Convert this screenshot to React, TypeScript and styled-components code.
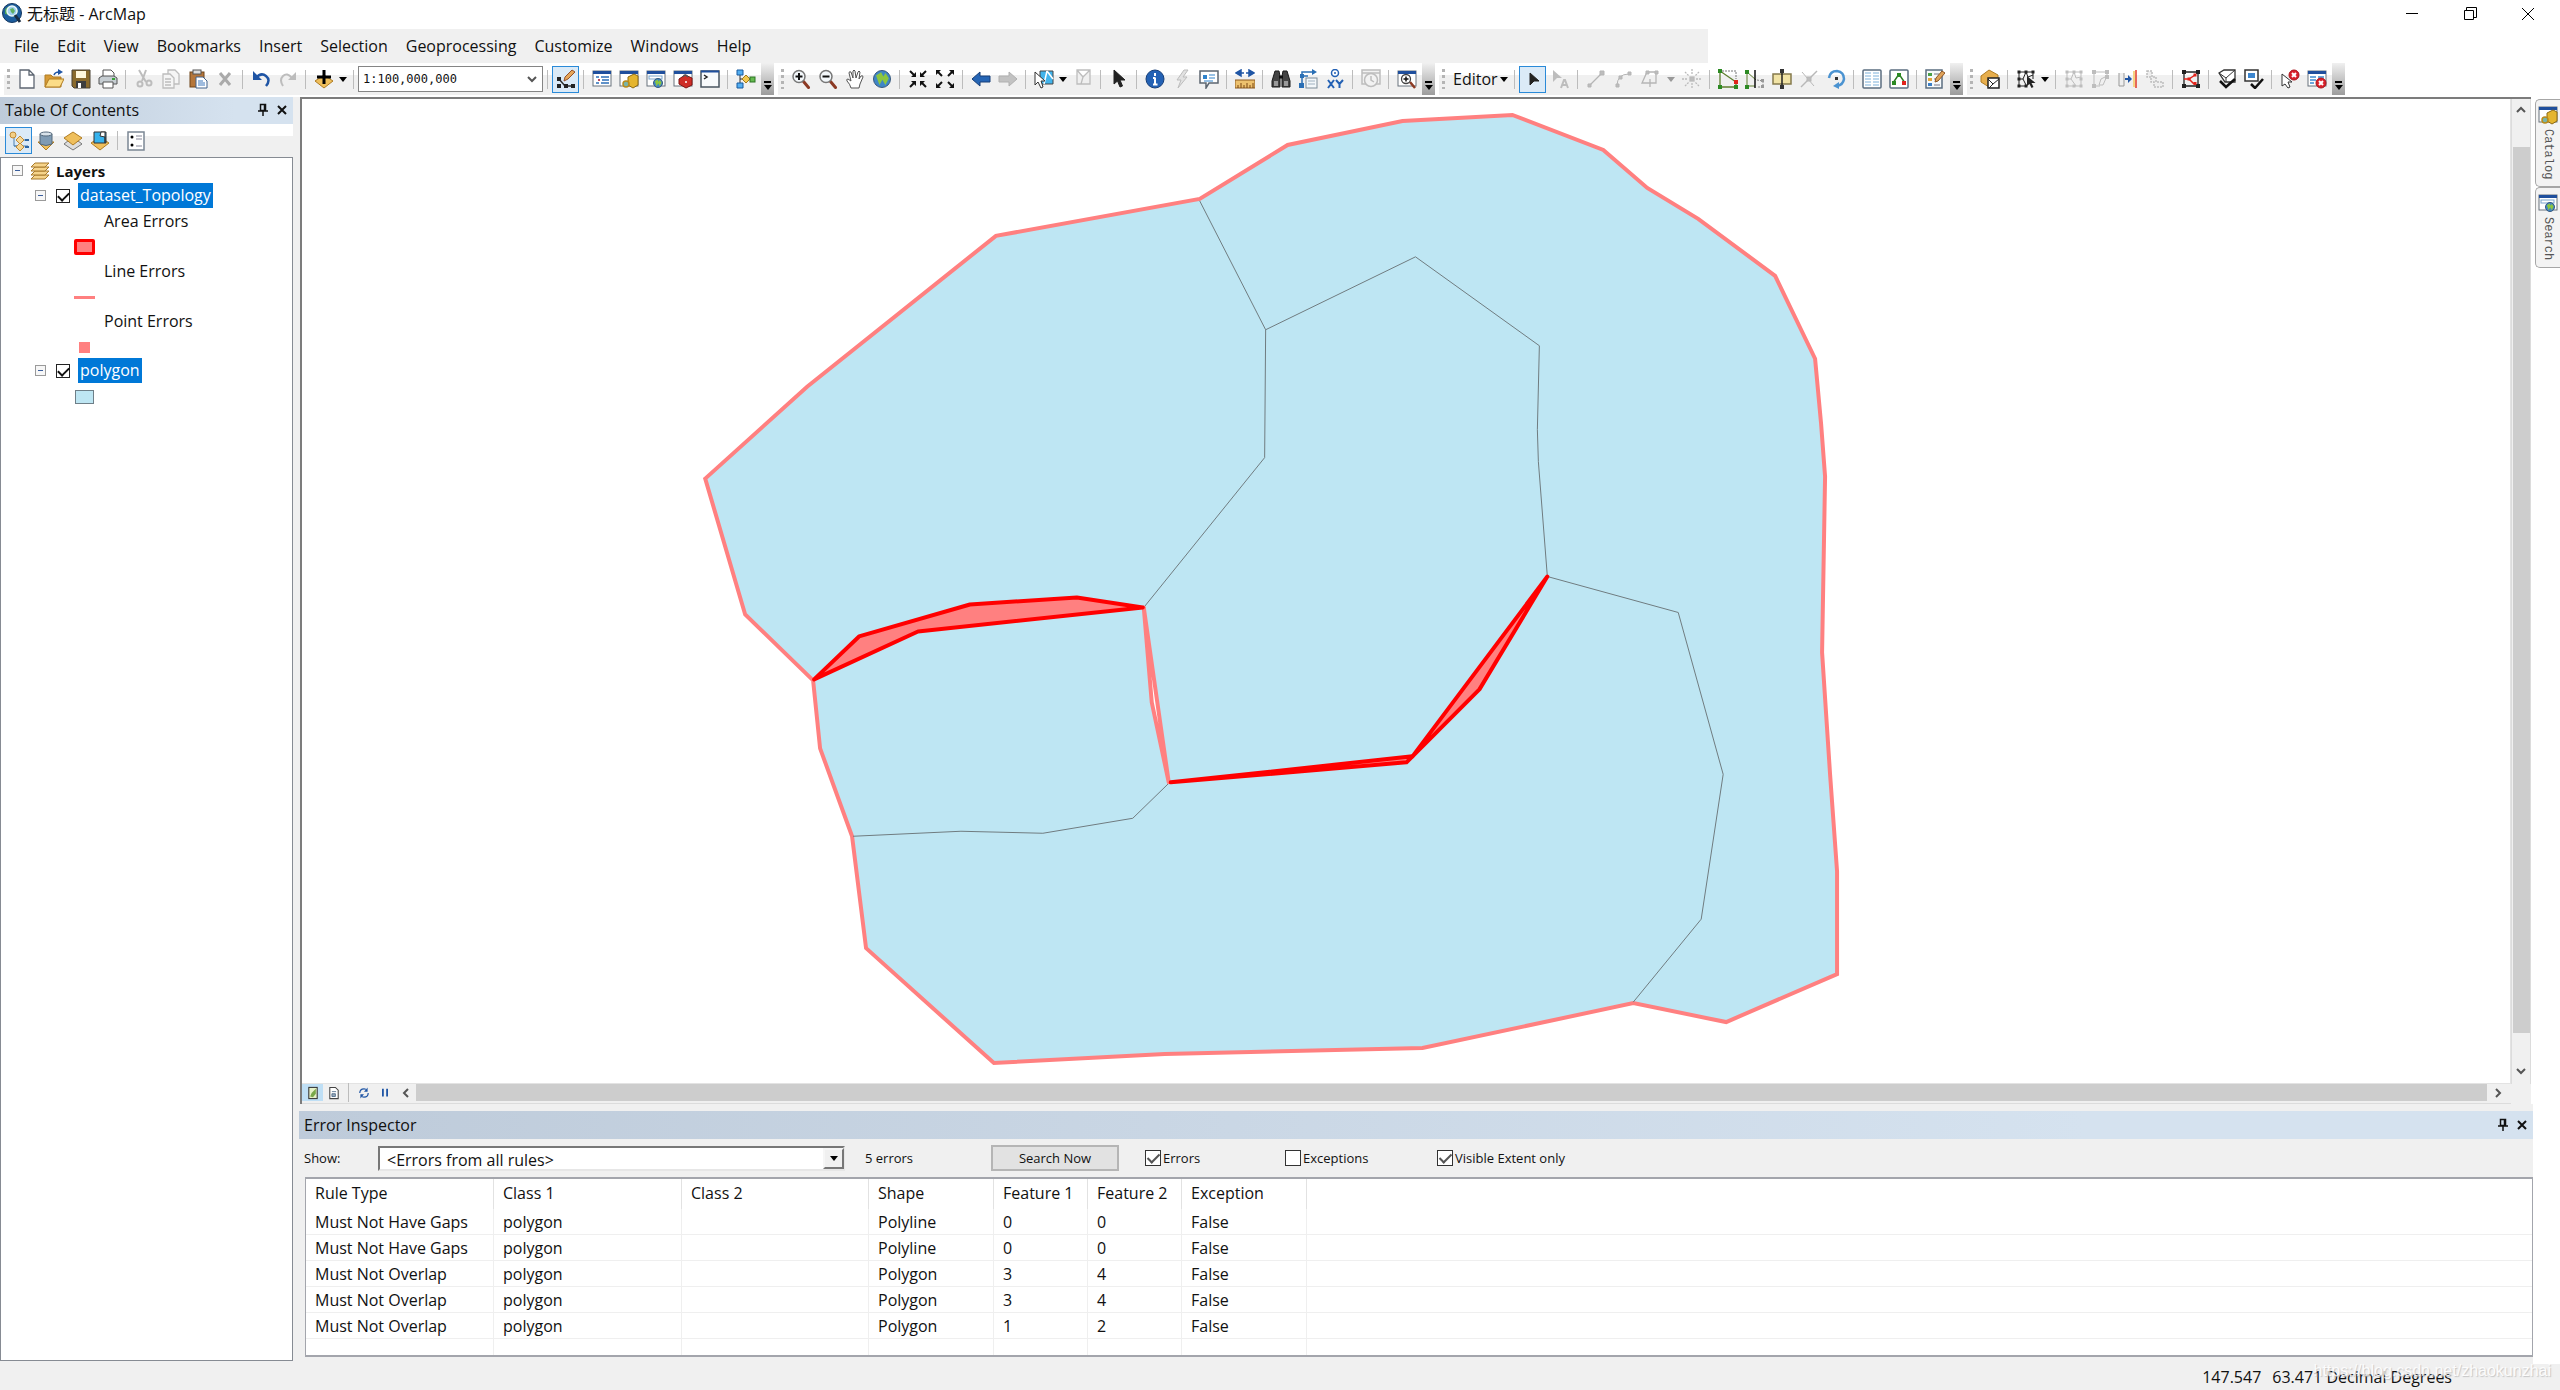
import React, { useId, useState } from "react";
import styled, { createGlobalStyle, css } from "styled-components";

const ui = '"Open Sans", "Noto Sans", "Noto Sans CJK SC", sans-serif';
const mono = '"DejaVu Sans Mono", "Noto Sans CJK SC", monospace';
const face = "#f0f0f0";

const Global = createGlobalStyle`
  * { box-sizing: border-box; }
  body { margin: 0; background: #fff; font-family: ${ui}; font-size: 16px; line-height: 24px; color: #111; }
  button, select, input { font: inherit; color: inherit; margin: 0; padding: 0; }
  button { border: 0; background: none; }
  svg { display: block; flex: none; }
`;

/* ---------- icons ---------- */

const gold = "#efbf5c";
const goldDark = "#b07c22";
const grey = "#bdbdbd";
const blue = "#1f55a5";
const ink = "#222";

const Win = () => (
  <>
    <rect x="1" y="2" width="18" height="15" fill="#fff" stroke="#68727c" />
    <rect x="1" y="2" width="18" height="3" fill="#1f4f9d" />
  </>
);
const Globe = ({ x = 13, y = 14, r = 4 }: { x?: number; y?: number; r?: number }) => (
  <>
    <circle cx={x} cy={y} r={r} fill="#3f86c6" stroke="#37587c" />
    <path
      d={`M${x - r * 0.7} ${y - r * 0.4}l${r * 0.6} ${-r * 0.4}l${r * 0.3} ${r * 0.6}l${-r * 0.5} ${r * 0.9}z M${x} ${y}l${r * 0.4} ${-r * 0.7}l${r * 0.4} ${r * 0.6}l${-r * 0.4} ${r * 0.8}z`}
      fill="#8cc63f"
    />
  </>
);
const Frame = ({ c = ink }: { c?: string }) => (
  <>
    <path d="M3 3v14h14V3zM3 10h4l3-7M7 10l5 7M10 3l2 6 5-1" fill="none" stroke={c} />
    <path d="M1.500 1.500h3v3h-3zM8.500 1.500h3v3h-3zM15.500 1.500h3v3h-3zM1.500 8.500h3v3h-3zM15.500 8.500h3v3h-3zM1.500 15.500h3v3h-3zM8.500 15.500h3v3h-3zM15.500 15.500h3v3h-3z" fill={c} />
  </>
);
const Glass = ({ plus }: { plus?: boolean }) => (
  <>
    <path d="M12.500 12.500l5 6" stroke="#8c3a24" strokeWidth="3" strokeLinecap="round" />
    <circle cx="8" cy="7.500" r="6" fill="#f3f7fa" stroke="#777" strokeWidth="1.500" />
    <path d={plus ? "M4.500 7.500h7M8 4v7" : "M4.500 7.500h7"} stroke="#111" strokeWidth="2" />
  </>
);
const Diamond = ({ y = 10, c = gold }: { y?: number; c?: string }) => (
  <path d={`M10 ${y - 6}l9 6-9 7-9-7z`} fill={c} stroke={goldDark} />
);
const RedX = ({ x = 13, y = 13, r = 5 }: { x?: number; y?: number; r?: number }) => (
  <>
    <circle cx={x} cy={y} r={r} fill="#d9202a" stroke="#a8141c" />
    <path d={`M${x - 2} ${y - 2}l4 4m0-4l-4 4`} stroke="#fff" strokeWidth="2" />
  </>
);
const Sheet = ({ c = "#5d6672", f = "#fff" }: { c?: string; f?: string }) => (
  <path d="M3 1h9l5 5v13H3zM12 1v5h5" fill={f} stroke={c} strokeWidth="1.300" />
);
const Pointer = ({ c = ink, f = ink }: { c?: string; f?: string }) => (
  <path d="M5 1v14l3.500-3 2.500 6 2.500-1-2.500-6h5z" fill={f} stroke={c} />
);

const icons: Record<string, React.ReactNode> = {
  new: <Sheet />,
  open: (
    <>
      <path d="M1 6h6l2 2h8v10H1z" fill="#d69a36" stroke={goldDark} />
      <path d="M1 18l4-8h15l-4 8z" fill="#fbdc87" stroke={goldDark} />
      <path d="M10 6q1-3 5-3" stroke={blue} strokeWidth="1.500" fill="none" />
      <path d="M14 0l5 3-5 3z" fill={blue} />
    </>
  ),
  save: (
    <>
      <path d="M1 1h18v18H3l-2-2z" fill="#8a6a2c" stroke="#4b4234" />
      <rect x="5" y="2" width="10" height="7" fill="#fff7dc" />
      <rect x="5" y="12" width="10" height="7" fill="#3d3d3d" />
      <rect x="7" y="14" width="3" height="5" fill="#fff" />
    </>
  ),
  print: (
    <>
      <path d="M5 8V1h8l3 3v4" fill="#fff" stroke="#555" />
      <path d="M1 9l3-2h12l3 2v6H1z" fill="#c6cdd2" stroke="#555" />
      <path d="M5 13h10v6H5z" fill="#fff" stroke="#555" />
      <path d="M14 10h3" stroke="#39a03a" strokeWidth="2" />
    </>
  ),
  cut: (
    <g fill="none" stroke={grey} strokeWidth="2">
      <path d="M5 1l7 12M12 1L8 12" />
      <circle cx="6" cy="15" r="2.500" />
      <circle cx="15" cy="14" r="2.500" />
    </g>
  ),
  copy: (
    <g fill="#f5f5f5" stroke={grey} strokeWidth="1.300">
      <path d="M7 1h7l4 4v10H7z" />
      <path d="M2 5h7l4 4v10H2zM4 10h6M4 13h6M4 16h6" />
    </g>
  ),
  paste: (
    <>
      <rect x="2" y="3" width="14" height="15" fill="#b5763a" stroke="#6f4419" />
      <rect x="5" y="1" width="8" height="4" fill="#ddd" stroke="#555" />
      <path d="M8 8h7l4 4v7H8z" fill="#fff" stroke="#40628c" />
      <path d="M10 12h5M10 14h7M10 16h7" stroke="#3f78bd" />
    </>
  ),
  del: <path d="M5 4l10 12M15 4L5 16" stroke="#aaa" strokeWidth="3" />,
  undo: (
    <>
      <path d="M5 9q5-6 10-2t0 10" fill="none" stroke={blue} strokeWidth="2.500" />
      <path d="M2 2v9h9z" fill={blue} />
    </>
  ),
  redo: (
    <>
      <path d="M14 9Q9 3 5 7t0 10" fill="none" stroke={grey} strokeWidth="2" />
      <path d="M18 3v8H10z" fill={grey} />
    </>
  ),
  add: (
    <>
      <Diamond y={12} />
      <path d="M10 1v14M3 8h14" stroke="#000" strokeWidth="3" />
    </>
  ),
  sketch: (
    <>
      <path d="M3 10l6 7h8" fill="none" stroke="#333" strokeWidth="1.500" />
      <path d="M1 8h4v4H1zM1 15h4v4H1zM8 15h4v4H8zM15 15h4v4h-4z" fill="#222" />
      <path d="M8 12l1-4 7-7 3 2-7 7z" fill="#e6a659" stroke="#94512a" />
    </>
  ),
  toc: (
    <>
      <Win />
      <path d="M4 8h3M9 8h8M6 11h2M10 11h7M4 14h3M9 14h8" stroke="#2d6fb8" strokeWidth="1.500" />
      <path d="M6 11h2" stroke="#d33" strokeWidth="1.500" />
    </>
  ),
  catalog: (
    <>
      <Win />
      <path d="M9 8l6-3 4 2v9l-5 3-5-3z" fill="#e5b52e" stroke="#8d6a12" />
      <circle cx="7" cy="15" r="3" fill="#79b4a8" stroke="#b78a1b" strokeWidth="1.500" />
    </>
  ),
  search: (
    <>
      <Win />
      <rect x="3" y="7" width="13" height="3" fill="#fff" stroke="#7aa5cc" />
      <Globe x={12} y={14} r={4.5} />
    </>
  ),
  toolbox: (
    <>
      <Win />
      <path d="M6 10l6-4 7 3v7l-6 3-7-4z" fill="#cf2d27" stroke="#7d1512" />
      <path d="M10 8q2-4 5 0" fill="none" stroke="#555" strokeWidth="1.500" />
      <circle cx="13" cy="13" r="1" fill="#fff" />
    </>
  ),
  python: (
    <>
      <rect x="1" y="2" width="18" height="16" fill="#f8fafc" stroke="#4a5560" strokeWidth="1.500" />
      <path d="M1 2.500h18" stroke="#1f4f9d" strokeWidth="2" />
      <path d="M4 6l3 2-3 2" fill="none" stroke="#222" strokeWidth="1.500" />
    </>
  ),
  model: (
    <>
      <path d="M4 4v12M4 10h14" stroke="#333" />
      <path d="M1 1h6v5H1zM1 14h6v5H1z" fill="#54aef0" stroke="#175aa0" />
      <path d="M6 10l4-4 4 4-4 4z" fill="#f3c84e" stroke="#a47a1a" />
      <rect x="14" y="8" width="5" height="5" fill="#65ba50" stroke="#2c7422" />
    </>
  ),
  zoomin: <Glass plus />,
  zoomout: <Glass />,
  pan: (
    <path
      d="M6 19q-1-4-4-7-1-2 1-2l3 2L4 4q0-2 2-1l2 6V2q1-2 2 0l1 7 2-6q1-2 2 0l-1 7 2-3q2-1 2 1l-3 7-1 4z"
      fill="#fff"
      stroke="#555"
    />
  ),
  globe: <Globe x={10} y={10} r={8.5} />,
  shrink: (
    <g fill="#111" stroke="#111" strokeWidth="2">
      <path d="M2 2l4 4M18 2l-4 4M2 18l4-4M18 18l-4-4" />
      <path d="M8 3v5H3zM12 3v5h5zM8 17v-5H3zM12 17v-5h5z" strokeWidth="0" />
    </g>
  ),
  expand: (
    <g fill="#111" stroke="#111" strokeWidth="2">
      <path d="M3 3l4 4M17 3l-4 4M3 17l4-4M17 17l-4-4" />
      <path d="M1 6V1h5zM19 6V1h-5zM1 14v5h5zM19 14v5h-5z" strokeWidth="0" />
    </g>
  ),
  back: <path d="M1 10l8-7v4h10v6H9v4z" fill="#2565b5" stroke="#173f78" />,
  fwd: <path d="M19 10l-8-7v4H1v6h10v4z" fill="#c2c2c2" stroke="#b0b0b0" />,
  select: (
    <>
      <path d="M6 2h13v13H6z" fill="#42b4ec" stroke="#444" />
      <path d="M13 2l6 8M13 2l-3 13" stroke="#fff" strokeWidth="1.500" />
      <path d="M1 3v13l3-3 3 6 2-1-2-6h4z" fill="#fff" stroke="#333" />
    </>
  ),
  clear: (
    <g fill="#f0f0f0" stroke={grey} strokeWidth="1.300">
      <path d="M4 1h13v14H4zM4 1l6 7 7-7M10 8l-2 7" />
    </g>
  ),
  arrow: <Pointer />,
  info: (
    <>
      <circle cx="10" cy="10" r="9" fill="#2361b4" stroke="#163e78" />
      <path d="M10 4v3M10 8.500v7M8 15.500h4.500M8 9h2" stroke="#fff" strokeWidth="2" />
    </>
  ),
  bolt: <path d="M12 1L5 11h4L6 19l9-11h-4l5-7z" fill="#e2e2e2" stroke={grey} />,
  popup: (
    <>
      <path d="M1 2h18v12h-9l-3 5v-5H1z" fill="#fff" stroke="#5c6670" strokeWidth="1.500" />
      <path d="M4 6h4v4H4z" fill="#3183cb" />
      <path d="M10 6h6M10 9h6M5 12h9" stroke="#3183cb" />
    </>
  ),
  measure: (
    <>
      <path d="M1 4l5-3v6zM19 4l-5-3v6zM3 4h6M11 4h6" fill={blue} stroke={blue} strokeWidth="1.500" />
      <rect x="0" y="11" width="20" height="8" fill="#edc16e" stroke="#8b5a20" />
      <path d="M3 19v-3M6 19v-5M9 19v-3M12 19v-5M15 19v-3M18 19v-5" stroke="#7a4612" />
    </>
  ),
  find: (
    <>
      <path d="M4 2h4l1 5v11H1v-6zM16 2h-4l-1 5v11h8v-6z" fill="#444" stroke="#1b1b1b" />
      <path d="M3 12h4v5H3zM13 12h4v5h-4z" fill="#999" />
      <path d="M8 8h4" stroke="#111" strokeWidth="3" />
    </>
  ),
  route: (
    <>
      <path d="M4 14V3h11M4 7h6" stroke="#2a6fb5" fill="none" strokeWidth="1.500" />
      <path d="M14 0l5 3-5 3zM1 14h5v5H1zM2 5h4v4H2z" fill="#2a6fb5" />
      <rect x="8" y="9" width="11" height="10" fill="#f3f7fa" stroke="#7c8c99" />
      <path d="M10 12h7M10 15h7" stroke="#9fb1c0" />
    </>
  ),
  xy: (
    <>
      <circle cx="10" cy="4" r="3.500" fill="#fff" stroke="#2361b4" strokeWidth="1.500" />
      <circle cx="10" cy="4" r="1" fill="#2361b4" />
      <path d="M3 11l6 8M9 11l-6 8M11 11l3.500 4 3.500-4M14.500 15v4" stroke="#2361b4" strokeWidth="2" fill="none" />
    </>
  ),
  time: (
    <g fill="#f2f2f2" stroke={grey} strokeWidth="1.500">
      <path d="M1 1h18v14H1zM1 4h18" />
      <circle cx="10" cy="11" r="6.500" />
      <path d="M10 7v4l3 2" />
    </g>
  ),
  viewer: (
    <>
      <Win />
      <path d="M13 13l5 6" stroke="#8c3a24" strokeWidth="2.500" />
      <circle cx="9" cy="10" r="4.500" fill="#fff" stroke="#444" strokeWidth="1.300" />
      <path d="M6.500 10h5M9 7.500v5" stroke="#111" strokeWidth="1.500" />
    </>
  ),
  edit: <path d="M7 4v12l4-4h5z" fill="#222" stroke="#222" />,
  editA: (
    <>
      <path d="M3 1v12l4-4h5z" fill={grey} />
      <path d="M11 19l3-8h1l3 8M12 16h5" fill="none" stroke={grey} strokeWidth="2" />
    </>
  ),
  line: (
    <g stroke="#b5b5b5" fill={grey}>
      <path d="M3 17L16 4" strokeWidth="1.300" />
      <path d="M14 2h4v4h-4zM2 15h3v3H2z" />
    </g>
  ),
  arc: (
    <g stroke="#b5b5b5" fill={grey}>
      <path d="M4 17Q4 5 16 5" fill="none" />
      <path d="M15 3h3v3h-3zM3 15h3v3H3zM6 7h3v3H6z" />
    </g>
  ),
  trace: (
    <g stroke="#b5b5b5" fill="none">
      <path d="M8 14H2L7 3h9v11h-3M10 10v8M6 14h9" strokeWidth="1.300" />
      <path d="M6 2h3v3H6zM15 2h3v3h-3z" fill={grey} />
    </g>
  ),
  burst: (
    <g stroke="#bbb" strokeWidth="1.300">
      <path d="M10 0v6M10 14v6M0 10h6M14 10h6M3 3l4 4M17 3l-4 4M3 17l4-4M17 17l-4-4" strokeDasharray="2 1" />
      <rect x="8" y="8" width="4" height="4" fill={grey} />
    </g>
  ),
  reshape: (
    <>
      <path d="M2 2v16h16v-5L2 2" fill="none" stroke="#5e7d2e" strokeWidth="1.300" />
      <path d="M4 2h14v8" fill="none" stroke="#777" strokeDasharray="2 1" />
      <path d="M0 0h4v4H0zM0 16h4v4H0zM16 16h4v4h-4z" fill="#2c8a23" />
      <rect x="16" y="11" width="4" height="4" fill="#e0241c" />
    </>
  ),
  split: (
    <>
      <path d="M2 3l9 8M2 3v14h8" fill="none" stroke="#5e7d2e" />
      <path d="M10 1v18" stroke="#111" strokeWidth="1.500" />
      <path d="M0 1h4v4H0zM0 16h4v4H0z" fill="#2c8a23" />
      <path d="M12 11l6 1v6h-6" fill="none" stroke="#888" strokeDasharray="2 1" />
      <path d="M16 10h3v3h-3zM16 16h3v3h-3z" fill="#999" />
    </>
  ),
  cutpoly: (
    <>
      <rect x="1" y="5" width="18" height="10" fill="#f1e3a5" stroke="#857a4c" strokeWidth="1.500" />
      <path d="M10 0v20" stroke="#222" strokeWidth="1.500" />
      <path d="M8 0h4v4H8zM8 16h4v4H8z" fill="#333" />
    </>
  ),
  splitline: (
    <g stroke="#b8b8b8" fill="none">
      <path d="M2 18L18 2" strokeWidth="1.500" />
      <path d="M3 3l12 14" />
      <rect x="8" y="8" width="4" height="4" fill={grey} />
    </g>
  ),
  rotate: (
    <>
      <path d="M3 9q1-7 8-7 7 1 7 8-1 6-7 7" fill="none" stroke="#4b93d1" strokeWidth="2.500" />
      <path d="M13 13v7l-6-3z" fill="#4b93d1" />
      <rect x="9" y="8" width="3" height="3" fill="#333" />
    </>
  ),
  attrs: (
    <>
      <rect x="1" y="1" width="18" height="18" rx="1" fill="#fff" stroke="#5b6e80" strokeWidth="1.500" />
      <path d="M3 4h6M3 7h6M3 10h6M3 13h6M3 16h6M11 4h6M11 7h6M11 10h6M11 13h6M11 16h6" stroke="#7db1da" />
    </>
  ),
  sketchprops: (
    <>
      <rect x="1" y="1" width="18" height="18" rx="1" fill="#fff" stroke="#5b6e80" strokeWidth="1.500" />
      <path d="M4 14l6-9 6 9" fill="none" stroke="#2c7a23" strokeWidth="1.500" />
      <path d="M8 4h4v4H8zM3 12h4v4H3z" fill="#2c8a23" />
      <rect x="13" y="12" width="4" height="4" fill="#e0241c" />
    </>
  ),
  template: (
    <>
      <path d="M1 1h16v18H1z" fill="#f6f9fb" stroke="#5b6e80" strokeWidth="1.500" />
      <path d="M3 4h4v3H3z" fill="#4aa04a" />
      <path d="M3 9h4v3H3z" fill="#e3a63f" />
      <path d="M3 14h4v3H3z" fill="#3a7dc4" />
      <path d="M9 5h5M9 10h3M9 16h6" stroke="#778" />
      <path d="M10 13l1-4 6-7 3 2-7 8z" fill="#e0a35a" stroke="#8d5523" />
    </>
  ),
  topo: (
    <>
      <path d="M1 7l8-6 9 5v6l-9 6-8-5z" fill="#e7ae4c" stroke={goldDark} />
      <rect x="8" y="9" width="11" height="10" fill="#fff" stroke="#222" strokeWidth="1.500" />
      <path d="M8 10l5 5 6-5M13 15l-4 4" stroke="#222" fill="none" />
    </>
  ),
  frame: (
    <>
      <path d="M3 3v14h8M3 3h14v7M3 10h4l3-7M7 10l3 6M10 3l2 5 5-2" fill="none" stroke={ink} />
      <path d="M1.500 1.500h3v3h-3zM8.500 1.500h3v3h-3zM15.500 1.500h3v3h-3zM1.500 8.500h3v3h-3zM1.500 15.500h3v3h-3zM8.500 15.500h3v3h-3z" fill={ink} />
      <path d="M11 7v10l2.500-2 2 4 2-1-2-4h4z" fill={ink} />
    </>
  ),
  frameG: <Frame c={grey} />,
  frameG2: (
    <>
      <path d="M3 3v14h6M3 3h13v4M16 7l-4 9h-4l2-6z" fill="none" stroke={grey} />
      <path d="M1 1h4v4H1zM1 15h4v4H1zM14 1h4v4h-4zM14 6h4v4h-4z" fill={grey} />
    </>
  ),
  align: (
    <>
      <path d="M1 4v13h5V4" fill="#eee" stroke="#999" />
      <path d="M7 10h5" stroke={blue} strokeWidth="2" />
      <path d="M10 6l4 4-4 4z" fill={blue} />
      <path d="M15 2h2v16h-2z" fill="#f5d583" />
      <path d="M18 1v18" stroke="#e23b2a" strokeWidth="1.500" />
    </>
  ),
  gen: <path d="M2 2h5v6h4v5h7v5H9v-5H6V8H2z" fill="#eee" stroke={grey} strokeDasharray="2 1" strokeWidth="1.500" />,
  frameR: (
    <>
      <path d="M3 3v14h14V3z" fill="none" stroke="#222" strokeWidth="1.300" />
      <path d="M3 10h5l6-4M8 10l5 5" fill="none" stroke="#e2231a" strokeWidth="1.500" />
      <path d="M1 1h4v4H1zM15 1h4v4h-4zM1 15h4v4H1zM15 15h4v4h-4z" fill="#222" />
      <path d="M6.500 8.500h3v3h-3zM12.500 4.500h3v3h-3zM12.500 13h3v3h-3z" fill="#e2231a" />
    </>
  ),
  validate: (
    <>
      <path d="M2 4l5-3h11v12H8z" fill="#fff" stroke="#333" strokeWidth="1.300" />
      <path d="M2 4l7 5 9-8M9 9v4" stroke="#333" fill="none" />
      <path d="M3 12l6 6 9-8" stroke="#111" strokeWidth="2.500" fill="none" />
    </>
  ),
  validate2: (
    <>
      <path d="M1 1h13v11H1z" fill="#fff" stroke="#333" strokeWidth="1.500" />
      <path d="M4 4h7v5H4z" fill="#3c86cf" />
      <path d="M7 15l4 4 8-9" stroke="#111" strokeWidth="2.500" fill="none" />
    </>
  ),
  fix: (
    <>
      <path d="M2 5v12l3-2 3 4 2-1-2-5h4z" fill="#fff" stroke="#333" />
      <RedX x={14} y={6} />
    </>
  ),
  inspector: (
    <>
      <Win />
      <path d="M3 8h6M3 11h6M3 14h4M11 8h6" stroke="#3c8bd0" strokeWidth="1.500" />
      <RedX x={14} y={14} />
    </>
  ),
  tOrder: (
    <>
      <path d="M5 6v9h4M10 9h9M5 15h14" stroke="#4a7fae" fill="none" />
      <circle cx="4" cy="4" r="3" fill="#f3cf85" stroke="#c08a34" />
      <path d="M11 5l4 4-4 4-4-4zM11 12l4 4-4 4-4-4z" fill="#f7d793" stroke="#c08a34" />
      <path d="M16 9h4M16 16h4" stroke="#2c66a4" strokeWidth="2" />
    </>
  ),
  tSource: (
    <>
      <path d="M2 11h16l-8 8z" fill={gold} stroke={goldDark} />
      <path d="M4 3v10q6 3 12 0V3z" fill="#7f9bb4" stroke="#54687b" />
      <ellipse cx="10" cy="3" rx="6" ry="2" fill="#d8e2ea" stroke="#54687b" />
    </>
  ),
  tVis: (
    <>
      <path d="M10 6l9 7-9 6-9-6z" fill="#ddd" stroke="#777" />
      <Diamond y={7} />
    </>
  ),
  tSel: (
    <>
      <Diamond y={12} />
      <path d="M4 1h12v11H4z" fill="#36b3ee" stroke="#333" />
      <path d="M11 1l-1 4 5 1v6V1z" fill="#fff" stroke="#333" />
    </>
  ),
  tOpt: (
    <>
      <rect x="2" y="1" width="16" height="18" fill="#fff" stroke="#7b8794" strokeWidth="1.500" />
      <path d="M10 5h6M10 8h6M10 15h6" stroke="#889" />
      <circle cx="6" cy="6" r="1.500" />
      <circle cx="6" cy="14" r="1.500" />
    </>
  ),
  layers: (
    <g fill="#f6d48b" stroke="#a87b2d">
      <path d="M1 18l4-4h14l-4 4z" />
      <path d="M1 14l4-4h14l-4 4z" />
      <path d="M1 10l4-4h14l-4 4z" />
      <path d="M1 6l4-4h14l-4 4z" />
    </g>
  ),
  vData: (
    <>
      <rect x="4" y="2" width="12" height="16" fill="#e6f1c8" stroke="#333" strokeWidth="1.500" />
      <path d="M6 15l2-5 6-6v7l-4 5z" fill="#79a84a" />
    </>
  ),
  vLayout: (
    <>
      <path d="M4 2h8l4 4v12H4z" fill="#fff" stroke="#444" strokeWidth="1.500" />
      <path d="M7 8h6M7 11h5v4H7z" stroke="#357" fill="#9ab" />
    </>
  ),
  refresh: (
    <>
      <path d="M3 10q0-7 7-7l3 1M17 10q0 7-7 7l-3-1" fill="none" stroke={blue} strokeWidth="2" />
      <path d="M16 1v7h-6zM4 19v-7h6z" fill={blue} />
    </>
  ),
  pause: <path d="M5 3h3v13H5zM12 3h3v13h-3z" fill={blue} />,
};

const Icon = ({ name, size = 20 }: { name: string; size?: number }) => (
  <svg width={size} height={size} viewBox="0 0 20 20" aria-hidden="true">
    {icons[name]}
  </svg>
);

const PinGlyph = () => (
  <svg width="10" height="14" viewBox="0 0 10 14" aria-hidden="true">
    <path d="M2.500 1.500h5v6h-5zM6.500 1v7M0 8h10M5 8v5" fill="none" stroke="#111" strokeWidth="1.500" />
  </svg>
);
const CloseGlyph = () => (
  <svg width="10" height="10" viewBox="0 0 10 10" aria-hidden="true">
    <path d="M1 1l8 8M9 1L1 9" stroke="#111" strokeWidth="2" />
  </svg>
);
const Chevron = ({ turn = 0 }: { turn?: number }) => (
  <svg width="10" height="10" viewBox="0 0 10 10" aria-hidden="true">
    <path d="M1 7l4-4 4 4" fill="none" stroke="#555" strokeWidth="2" transform={`rotate(${turn} 5 5)`} />
  </svg>
);
const CaretGlyph = ({ muted }: { muted?: boolean }) => (
  <svg width="8" height="5" viewBox="0 0 8 5" aria-hidden="true">
    <path d="M0 0h8L4 5z" fill={muted ? "#999" : "#000"} />
  </svg>
);

/* ---------- window frame ---------- */

const Window = styled.div`
  display: flex;
  flex-direction: column;
  height: 100vh;
  overflow: hidden;
  background: #fff;
`;
const TitleBar = styled.header`
  display: flex;
  align-items: center;
  flex: none;
  height: 29px;
  padding: 0 3px 2px 2px;
`;
const Title = styled.h1`
  flex: 1;
  margin: 0 0 0 4px;
  font-size: 16px;
  font-weight: 400;
`;
const WindowButton = styled.button`
  display: grid;
  place-items: center;
  width: 58px;
  height: 26px;
`;
const MenuBar = styled.nav`
  display: flex;
  align-items: center;
  flex: none;
  width: 66.7%;
  height: 34px;
  padding: 0 0 1px 5px;
  background: ${face};
`;
const MenuItem = styled.button`
  padding: 0 9px;
  white-space: nowrap;
`;

/* ---------- toolbars ---------- */

const ToolRow = styled.div`
  display: flex;
  flex: none;
  height: 34px;
  padding: 0 0 2px 4px;
  gap: 4px;
  background: #fff;
`;
const Bar = styled.div`
  display: flex;
  align-items: center;
  background: linear-gradient(#fff 0 12px, ${face} 12px);
`;
const Grip = styled.span`
  width: 3px;
  height: 20px;
  margin: 0 3px;
  background: repeating-linear-gradient(#b4b4b4 0 3px, transparent 3px 6px);
`;
const ToolButton = styled.button<{ $on?: boolean }>`
  display: grid;
  place-items: center;
  flex: none;
  width: 27px;
  height: 27px;
  ${(p) => p.$on && "background: #dbeaf7; border: 1px solid #2a8ad8;"}
`;
const CaretButton = styled.button<{ $w?: number }>`
  display: grid;
  place-items: center;
  width: ${(p) => p.$w ?? 12}px;
  height: 27px;
`;
const Rule = styled.span`
  flex: none;
  width: 1px;
  height: 19px;
  margin: 0 4px;
  background: #bcbcbc;
`;
const Overflow = styled.button`
  display: flex;
  flex-direction: column;
  justify-content: flex-end;
  align-items: center;
  gap: 2px;
  width: 13px;
  height: 32px;
  margin-left: 2px;
  padding-bottom: 5px;
  background: linear-gradient(#f0f0f0, #9c9c9c);
  &::before { content: ""; width: 7px; height: 2px; background: #000; }
`;
const EditorMenu = styled.button`
  display: flex;
  align-items: center;
  justify-content: space-between;
  width: 62px;
  padding: 0 2px 0 5px;
`;
const ScaleBox = styled.span`
  position: relative;
  display: flex;
`;
const ScaleSelect = styled.select`
  appearance: none;
  width: 185px;
  height: 26px;
  padding: 0 24px 3px 4px;
  border: 1px solid #858585;
  border-radius: 0;
  background: #fff;
  font-family: ${mono};
  font-size: 12px;
`;
const ScaleArrow = styled.span`
  position: absolute;
  top: 8px;
  right: 6px;
  pointer-events: none;
`;

/* ---------- work area ---------- */

const Work = styled.main`
  display: flex;
  flex: 1;
  min-height: 0;
`;
const Left = styled.aside`
  display: flex;
  flex-direction: column;
  flex: none;
  width: 300px;
  padding-right: 7px;
  padding-bottom: 3px;
  background: ${face};
`;
const PanelHead = styled.div<{ $h: number }>`
  display: flex;
  align-items: center;
  flex: none;
  height: ${(p) => p.$h}px;
  padding: 0 6px 1px 5px;
  gap: 9px;
  background: linear-gradient(90deg, #becbda, #d5e2ef 80%);
`;
const PanelTitle = styled.h2`
  flex: 1;
  margin: 0;
  font-size: 16px;
  font-weight: 400;
`;
const GlyphButton = styled.button`
  display: grid;
  place-items: center;
  width: 10px;
  height: 16px;
`;
const TocBar = styled.div`
  display: flex;
  align-items: center;
  flex: none;
  height: 33px;
  padding-left: 5px;
  background: linear-gradient(#fff 0 12px, ${face} 12px);
`;
const Tree = styled.ul`
  flex: 1;
  margin: 0;
  padding: 0 0 0 11px;
  list-style: none;
  border: 1px solid #868b93;
  background: #fff;
`;
const Node = styled.li<{ $indent: number }>`
  display: flex;
  align-items: center;
  height: 25px;
  padding-left: ${(p) => p.$indent}px;
  white-space: nowrap;
`;
const Expander = styled.button`
  display: grid;
  place-items: center;
  flex: none;
  width: 11px;
  height: 11px;
  border: 1px solid #9a9a9a;
  background: #f7f7f7;
  &::before { content: ""; width: 5px; height: 1px; background: #3b5f9d; }
`;
const Heading = styled.b`
  margin-left: 6px;
  font-size: 15px;
`;
const LayersIcon = styled.span`
  margin-left: 7px;
`;
const tick = css`
  appearance: none;
  display: grid;
  place-items: center;
  flex: none;
  background: #fff;
  border: 1px solid #222;
  &:checked::after {
    content: "";
    border: solid #111;
    transform: rotate(45deg);
  }
`;
const LayerTick = styled.input`
  ${tick}
  width: 14px;
  height: 14px;
  margin: 0 8px 0 10px;
  &:checked::after { width: 5px; height: 9px; margin-bottom: 2px; border-width: 0 2px 2px 0; }
`;
const LayerName = styled.label`
  height: 25px;
  padding: 0 2px;
  background: #0078d7;
  color: #fff;
`;
const Swatch = styled.span<{ $kind: "area" | "line" | "point" | "poly" }>`
  margin-top: 3px;
  ${(p) =>
    ({
      area: "width: 21px; height: 16px; background: #ff8080; border: 3px solid #f00; border-radius: 2px;",
      line: "width: 21px; height: 3px; background: #ff8080;",
      point: "width: 11px; height: 11px; margin-left: 5px; background: #ff8080;",
      poly: "width: 19px; height: 14px; margin-left: 1px; background: #bee6f3; border: 1px solid #6e7f88;",
    })[p.$kind]}
`;

const Right = styled.div`
  display: flex;
  flex-direction: column;
  flex: 1;
  min-width: 0;
`;
const Center = styled.div`
  display: grid;
  flex: 1;
  min-height: 0;
  margin-right: 2px;
  grid-template-columns: 1fr 20px;
  grid-template-rows: 1fr 20px;
  border: solid #7c7c7c;
  border-width: 2px 0 0 2px;
  background: ${face};
`;
const MapView = styled.svg`
  width: 100%;
  height: 100%;
  min-height: 0;
  background: #fff;
  border: solid #e3e3e3;
  border-width: 0 1px 1px 0;
`;
const VScroll = styled.div`
  display: flex;
  flex-direction: column;
  align-items: center;
  padding: 6px 1px 8px;
  border: solid #dcdcdc;
  border-width: 0 1px;
`;
const VThumb = styled.div`
  flex: 0 0 91.2%;
  width: 17px;
  margin-top: 32px;
  background: #cdcdcd;
`;
const ScrollButton = styled.button`
  display: grid;
  place-items: center;
  width: 17px;
  height: 10px;
`;
const DownButton = styled(ScrollButton)`
  margin-top: auto;
`;
const HScroll = styled.div`
  display: flex;
  align-items: center;
  height: 20px;
  padding: 0 3px 2px 0;
  border-bottom: 1px solid #dcdcdc;
`;
const HThumb = styled.div`
  flex: 1;
  height: 17px;
  background: #cdcdcd;
`;
const ViewButton = styled.button<{ $on?: boolean }>`
  display: grid;
  place-items: center;
  width: 21px;
  height: 17px;
  ${(p) => p.$on && "background: #bfdff5;"}
`;

/* ---------- error inspector ---------- */

const Inspector = styled.section`
  display: flex;
  flex-direction: column;
  flex: none;
  padding: 7px 0;
  margin-left: -1px;
  background: ${face};
`;
const Filters = styled.form`
  display: flex;
  align-items: center;
  height: 38px;
  padding: 0 5px;
  font-size: 13px;
`;
const Lead = styled.label`
  width: 74px;
`;
const RuleBox = styled.span`
  position: relative;
  display: flex;
`;
const RuleSelect = styled.select`
  appearance: none;
  width: 467px;
  height: 25px;
  padding: 0 24px 3px 7px;
  border: 2px solid;
  border-color: #777 #e6e6e6 #e6e6e6 #777;
  border-radius: 0;
  background: #fff;
  font-size: 16px;
`;
const RuleArrow = styled.span`
  position: absolute;
  top: 2px;
  right: 1px;
  display: grid;
  place-items: center;
  width: 21px;
  height: 21px;
  border: 2px solid;
  border-color: #f6f6f6 #777 #777 #f6f6f6;
  background: ${face};
  pointer-events: none;
`;
const Count = styled.output`
  width: 146px;
  padding-left: 20px;
`;
const SearchButton = styled.button`
  width: 128px;
  height: 26px;
  margin-right: 26px;
  border: 2px solid #b5b5b5;
  background: #e2e2e2;
  line-height: 20px;
`;
const Option = styled.label<{ $w: number }>`
  display: flex;
  align-items: center;
  gap: 2px;
  width: ${(p) => p.$w}px;
  white-space: nowrap;
`;
const OptionTick = styled.input`
  ${tick}
  width: 16px;
  height: 16px;
  border-color: #333;
  &:checked::after { width: 5px; height: 10px; margin-bottom: 3px; border-color: #555; border-width: 0 2px 2px 0; }
`;
const ListBox = styled.div`
  height: 180px;
  margin-left: 6px;
  overflow: hidden;
  border: solid #a3a5ac;
  border-width: 2px 1px;
  background: #fff;
`;
const Table = styled.table`
  width: 100%;
  table-layout: fixed;
  border-collapse: separate;
  border-spacing: 0;
  th, td {
    height: 26px;
    padding: 0 4px 0 9px;
    border: solid #efefef;
    border-width: 0 1px 1px 0;
    font-weight: 400;
    line-height: 20px;
    text-align: left;
    white-space: nowrap;
  }
  th { height: 30px; padding-bottom: 2px; border-bottom: 0; border-color: #e2e2e2; }
  th:last-child, td:last-child { border-right: 0; }
`;

const Dock = styled.aside`
  flex: none;
  width: 27px;
  padding: 2px 0 0 2px;
  background: #fff;
`;
const DockTab = styled.button<{ $h: number }>`
  display: flex;
  align-items: center;
  width: 25px;
  height: ${(p) => p.$h}px;
  padding: 5px 2px;
  gap: 4px;
  writing-mode: vertical-rl;
  border: 1px solid #a6a6a6;
  border-right: 0;
  border-radius: 5px 0 0 5px;
  background: #f3f3f3;
  color: #555;
  font-family: "Liberation Mono", monospace;
  font-size: 12px;
  line-height: 20px;
`;
const Status = styled.footer`
  position: relative;
  display: flex;
  flex: none;
  justify-content: flex-end;
  align-items: center;
  gap: 11px;
  height: 26px;
  padding-right: 108px;
  background: ${face};
`;
const Watermark = styled.span`
  position: absolute;
  right: 9px;
  top: -5px;
  color: #fff;
  opacity: 0.8;
  text-shadow: 1px 1px 1px #bbb;
  font: 16px/24px "Liberation Sans", sans-serif;
`;

/* ---------- data ---------- */

const menus = ["File", "Edit", "View", "Bookmarks", "Insert", "Selection", "Geoprocessing", "Customize", "Windows", "Help"];

/* "|" draws a rule, "v" a drop-down caret */
const standard1 = "new open save print | cut copy paste del | undo redo | add v |".split(" ");
const standard2 = "| *sketch | toc catalog search toolbox python | model".split(" ");
const tools = "zoomin zoomout pan globe | shrink expand | back fwd | select v clear | arrow | info bolt popup | measure | find route xy | time | viewer".split(" ");
const editor = "| *edit editA | line arc trace V burst | reshape split cutpoly splitline rotate | attrs sketchprops | template".split(" ");
const topology = "topo | frame v | frameG frameG2 align gen | frameR | validate validate2 | fix inspector".split(" ");

const errors = [
  ["Must Not Have Gaps", "polygon", "", "Polyline", "0", "0", "False"],
  ["Must Not Have Gaps", "polygon", "", "Polyline", "0", "0", "False"],
  ["Must Not Overlap", "polygon", "", "Polygon", "3", "4", "False"],
  ["Must Not Overlap", "polygon", "", "Polygon", "3", "4", "False"],
  ["Must Not Overlap", "polygon", "", "Polygon", "1", "2", "False"],
  ["", "", "", "", "", "", ""],
];
const columns: [string, number][] = [
  ["Rule Type", 188],
  ["Class 1", 188],
  ["Class 2", 187],
  ["Shape", 125],
  ["Feature 1", 94],
  ["Feature 2", 94],
  ["Exception", 125],
];

const outline =
  "704,479 806,387 995,236 1199,199 1287,145 1402,121 1512,115 1603,150 1647,188 1698,219 1775,276 1815,359 1821,424 1825,477 1822,653 1830,775 1837,872 1837,975 1726,1023 1633,1004 1422,1049 1164,1055 993,1064 865,949 851,837 819,749 812,681 744,615";

/* ---------- pieces ---------- */

const Tools = ({ items }: { items: string[] }) => (
  <>
    {items.map((item, i) => {
      if (item === "|") return <Rule key={i} />;
      if (item === "v" || item === "V")
        return (
          <CaretButton key={i} $w={item === "V" ? 15 : 12} aria-label="More">
            <CaretGlyph muted={item === "V"} />
          </CaretButton>
        );
      const on = item.startsWith("*");
      const name = on ? item.slice(1) : item;
      return (
        <ToolButton key={i} $on={on} aria-label={name}>
          <Icon name={name} />
        </ToolButton>
      );
    })}
  </>
);

const More = () => (
  <Overflow aria-label="Toolbar options">
    <CaretGlyph />
  </Overflow>
);

const Layer = ({ name }: { name: string }) => {
  const id = useId();
  return (
    <Node $indent={23}>
      <Expander aria-label={`Collapse ${name}`} />
      <LayerTick type="checkbox" id={id} defaultChecked />
      <LayerName htmlFor={id}>{name}</LayerName>
    </Node>
  );
};

const Check = ({ text, on, width }: { text: string; on?: boolean; width: number }) => {
  const [checked, setChecked] = useState(!!on);
  return (
    <Option $w={width}>
      <OptionTick type="checkbox" checked={checked} onChange={() => setChecked(!checked)} />
      {text}
    </Option>
  );
};

const PanelTools = () => (
  <>
    <GlyphButton aria-label="Auto hide">
      <PinGlyph />
    </GlyphButton>
    <GlyphButton aria-label="Close panel">
      <CloseGlyph />
    </GlyphButton>
  </>
);

export default function App() {
  return (
    <Window>
      <Global />
      <TitleBar>
        <svg width="21" height="21" viewBox="0 0 21 21" aria-hidden="true">
          <circle cx="10" cy="10" r="9.500" fill="#1c5c9c" stroke="#12365f" />
          <path d="M3 6q4-4 9-3l4 5-3 6-5-2-5-1z" fill="#4da356" />
          <circle cx="10" cy="8" r="5" fill="#9fd0ee" stroke="#e9f5fb" strokeWidth="1.500" />
          <path d="M8 6l3-1 2 3-2 3-2-2z" fill="#5fae62" />
          <path d="M13 12l5 7" stroke="#1a2d44" strokeWidth="3" />
        </svg>
        <Title>无标题 - ArcMap</Title>
        <WindowButton aria-label="Minimize">
          <svg width="12" height="12">
            <path d="M0 5.500h12" stroke="#000" />
          </svg>
        </WindowButton>
        <WindowButton aria-label="Restore">
          <svg width="13" height="13" fill="none" stroke="#000">
            <path d="M.5 3.500h9v9h-9zM2.500 3.500v-3h10v10h-3" />
          </svg>
        </WindowButton>
        <WindowButton aria-label="Close">
          <svg width="12" height="12">
            <path d="M0 0l12 12M12 0L0 12" stroke="#000" />
          </svg>
        </WindowButton>
      </TitleBar>

      <MenuBar>
        {menus.map((m) => (
          <MenuItem key={m}>{m}</MenuItem>
        ))}
      </MenuBar>

      <ToolRow>
        <Bar>
          <Grip />
          <Tools items={standard1} />
          <ScaleBox>
            <ScaleSelect aria-label="Map scale">
              <option>1:100,000,000</option>
            </ScaleSelect>
            <ScaleArrow>
              <Chevron turn={180} />
            </ScaleArrow>
          </ScaleBox>
          <Tools items={standard2} />
          <More />
        </Bar>
        <Bar>
          <Grip />
          <Tools items={tools} />
          <More />
        </Bar>
        <Bar>
          <Grip />
          <EditorMenu>
            Editor
            <CaretGlyph />
          </EditorMenu>
          <Tools items={editor} />
          <More />
        </Bar>
        <Bar>
          <Grip />
          <Tools items={topology} />
          <More />
        </Bar>
      </ToolRow>

      <Work>
        <Left>
          <PanelHead $h={27}>
            <PanelTitle>Table Of Contents</PanelTitle>
            <PanelTools />
          </PanelHead>
          <TocBar>
            <Tools items={["*tOrder", "tSource", "tVis", "tSel", "|", "tOpt"]} />
          </TocBar>
          <Tree>
            <Node $indent={0}>
              <Expander aria-label="Collapse Layers" />
              <LayersIcon>
                <Icon name="layers" />
              </LayersIcon>
              <Heading>Layers</Heading>
            </Node>
            <Layer name="dataset_Topology" />
            <Node $indent={92}>Area Errors</Node>
            <Node $indent={62}>
              <Swatch $kind="area" />
            </Node>
            <Node $indent={92}>Line Errors</Node>
            <Node $indent={62}>
              <Swatch $kind="line" />
            </Node>
            <Node $indent={92}>Point Errors</Node>
            <Node $indent={62}>
              <Swatch $kind="point" />
            </Node>
            <Layer name="polygon" />
            <Node $indent={62}>
              <Swatch $kind="poly" />
            </Node>
          </Tree>
        </Left>

        <Right>
          <Center>
            <MapView viewBox="301 99 2209 985" role="img" aria-label="Map of polygons with topology errors">
              <polygon points={outline} fill="#bee6f3" stroke="#ff8080" strokeWidth="4" />
              <g fill="none" stroke="#6f7b80" strokeWidth="1">
                <path d="M1199 201L1265 330L1415 257L1539 346L1537 430L1538 462L1547 577L1678 613L1723 775L1701 920L1633 1003" />
                <path d="M1265 330L1264 458L1143 608" />
                <path d="M1168 784L1132 819L1042 834L960 832L852 837" />
              </g>
              <path d="M1143 608L1168 783L1151 703Z" fill="#fff" stroke="#ff8080" strokeWidth="4" strokeLinejoin="round" />
              <g fill="#ff8080" stroke="#f00" strokeWidth="4" strokeLinejoin="round">
                <path d="M813 680L858 637L969 605L1076 598L1142 608L917 632Z" />
                <path d="M1170 783L1412 757L1406 763Z" />
                <path d="M1412 757L1547 577L1479 690Z" />
              </g>
            </MapView>
            <VScroll>
              <ScrollButton aria-label="Scroll up">
                <Chevron />
              </ScrollButton>
              <VThumb />
              <DownButton aria-label="Scroll down">
                <Chevron turn={180} />
              </DownButton>
            </VScroll>
            <HScroll>
              <ViewButton $on aria-label="Data view">
                <Icon name="vData" size={14} />
              </ViewButton>
              <ViewButton aria-label="Layout view">
                <Icon name="vLayout" size={14} />
              </ViewButton>
              <Rule />
              <ViewButton aria-label="Refresh">
                <Icon name="refresh" size={12} />
              </ViewButton>
              <ViewButton aria-label="Pause drawing">
                <Icon name="pause" size={12} />
              </ViewButton>
              <ViewButton aria-label="Scroll left">
                <Chevron turn={-90} />
              </ViewButton>
              <HThumb />
              <ViewButton aria-label="Scroll right">
                <Chevron turn={90} />
              </ViewButton>
            </HScroll>
          </Center>

          <Inspector>
            <PanelHead $h={28}>
              <PanelTitle>Error Inspector</PanelTitle>
              <PanelTools />
            </PanelHead>
            <Filters onSubmit={(e) => e.preventDefault()}>
              <Lead htmlFor="rules">Show:</Lead>
              <RuleBox>
                <RuleSelect id="rules">
                  <option>&lt;Errors from all rules&gt;</option>
                </RuleSelect>
                <RuleArrow>
                  <CaretGlyph />
                </RuleArrow>
              </RuleBox>
              <Count>5 errors</Count>
              <SearchButton>Search Now</SearchButton>
              <Check text="Errors" on width={140} />
              <Check text="Exceptions" width={152} />
              <Check text="Visible Extent only" on width={140} />
            </Filters>
            <ListBox>
              <Table>
                <colgroup>
                  {columns.map(([name, w]) => (
                    <col key={name} width={w} />
                  ))}
                  <col />
                </colgroup>
                <thead>
                  <tr>
                    {columns.map(([name]) => (
                      <th key={name} scope="col">
                        {name}
                      </th>
                    ))}
                    <th aria-hidden="true" />
                  </tr>
                </thead>
                <tbody>
                  {errors.map((row, i) => (
                    <tr key={i}>
                      {row.map((cell, j) => (
                        <td key={j}>{cell}</td>
                      ))}
                      <td />
                    </tr>
                  ))}
                </tbody>
              </Table>
            </ListBox>
          </Inspector>
        </Right>

        <Dock>
          <DockTab $h={88}>
            <Icon name="catalog" />
            Catalog
          </DockTab>
          <DockTab $h={81}>
            <Icon name="search" />
            Search
          </DockTab>
        </Dock>
      </Work>

      <Status>
        <span>147.547</span>
        <span>63.471 Decimal Degrees</span>
        <Watermark>https://blog.csdn.net/zhaokunzhai</Watermark>
      </Status>
    </Window>
  );
}
